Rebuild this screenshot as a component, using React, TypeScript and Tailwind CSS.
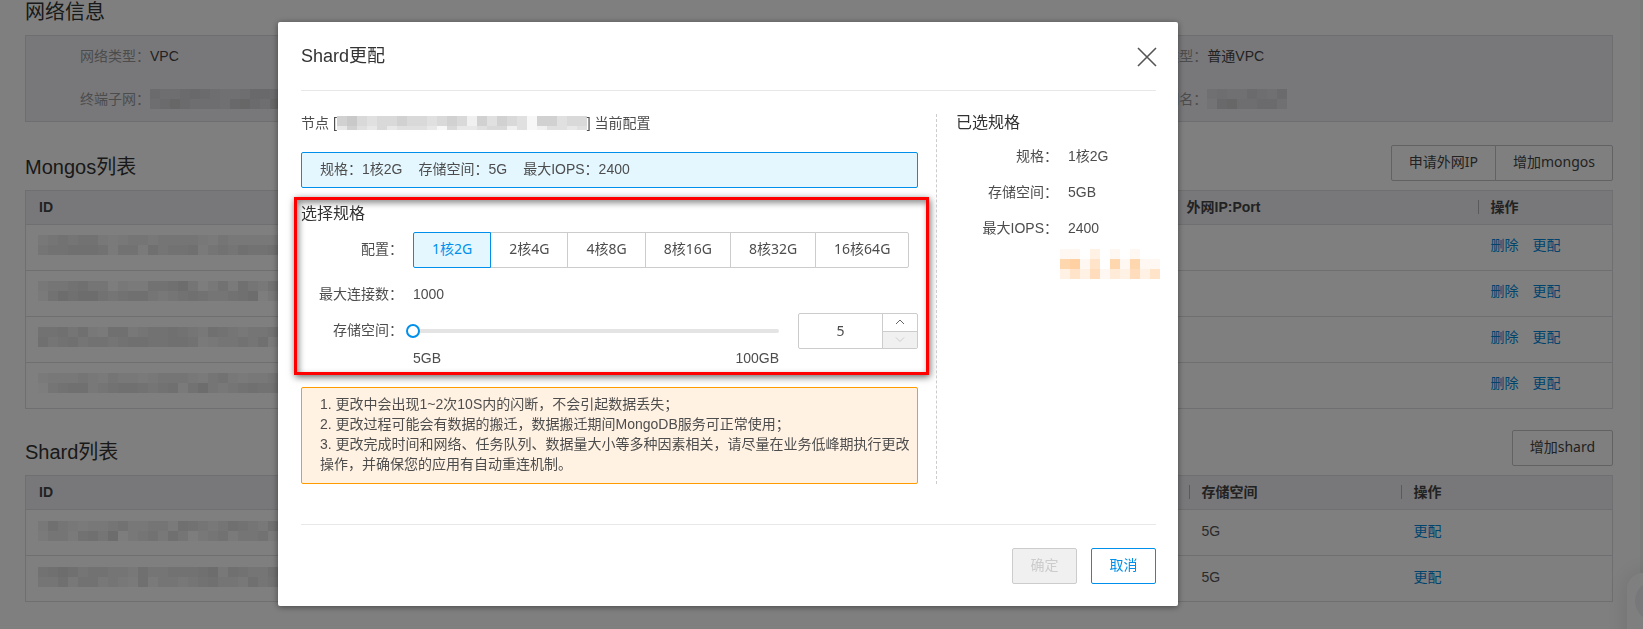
import { useState } from "react"
import type { ReactNode } from "react"
import clsx from "clsx"

const specs = ["1核2G", "2核4G", "4核8G", "8核16G", "8核32G", "16核64G"]

const MIN_SPACE = 5
const MAX_SPACE = 100

const mongosRows = [
  ["3454553234434444324333334", "4556665255264556245465567"],
  ["3445644132255674135264354", "2576775456643456544567135"],
  ["5564632663455654365434454", "6456455456655665234454627"],
  ["2333432433234443245323343", "1456634566545625743456554"],
]

const shardRows = [
  ["3643233453344265434654363", "2442564713453641345244523"],
  ["5676455443644555673654465", "4463553432624434564436455"],
]

// Masked value: every digit is one cell, the higher the darker
function Mosaic({ rows, color = "#000", step = 0.02 }: { rows: string[]; color?: string; step?: number }) {
  const width = rows[0].length * 10
  const height = rows.length * 10
  return (
    <svg
      width={width}
      height={height}
      viewBox={`0 0 ${width} ${height}`}
      shapeRendering="crispEdges"
      aria-hidden="true"
      className="shrink-0"
    >
      {rows.map((row, y) =>
        row
          .split("")
          .map((digit, x) => (
            <rect key={`${x}-${y}`} x={x * 10} y={y * 10} width="10" height="10" fill={color} fillOpacity={Number(digit) * step} />
          ))
      )}
    </svg>
  )
}

function InfoItem({ label, className, children }: { label: string; className?: string; children: ReactNode }) {
  return (
    <div className={clsx("flex h-10 items-center", className)}>
      <dt className="w-[124px] shrink-0 text-right text-[#999]">{label}：</dt>
      <dd className="text-[#444]">{children}</dd>
    </div>
  )
}

function Th({ divider, className, children }: { divider?: boolean; className?: string; children: ReactNode }) {
  return (
    <th className={clsx("p-0 pb-0.5 text-left font-bold text-[#444]", className)}>
      <div className={clsx("h-3.5 leading-3.5", divider ? "border-l border-[#b4b4b8] pl-3" : "pl-[13px]")}>{children}</div>
    </th>
  )
}

function PageButton({ className, children }: { className?: string; children: ReactNode }) {
  return (
    <button
      type="button"
      className={clsx(
        "h-9 border border-[#c4c4c8] px-[17px] pb-0.5 font-['Noto_Sans','Noto_Sans_CJK_SC',sans-serif] text-[#444]",
        className
      )}
    >
      {children}
    </button>
  )
}

function Field({ label, htmlFor, children }: { label: string; htmlFor?: string; children: ReactNode }) {
  return (
    <div className="flex h-9 items-center gap-2.5">
      <label htmlFor={htmlFor} className="w-[102px] shrink-0 pb-0.5 text-right">
        {label}：
      </label>
      {children}
    </div>
  )
}

function Chevron({ down }: { down?: boolean }) {
  return (
    <svg width="10" height="6" viewBox="0 0 10 6" fill="none" stroke="currentColor" aria-hidden="true">
      <path d={down ? "M1 0.5 5 4.5 9 0.5" : "M1 5 5 1 9 5"} />
    </svg>
  )
}

function InstancePage() {
  return (
    <main className="pr-[30px] pl-[25px]">
      <section>
        <h2 className="mb-[11px] text-xl leading-6 text-[#333]">网络信息</h2>
        <dl className="grid grid-cols-3 gap-y-[3px] border border-[#dcdce2] bg-[#f0f0f4] pb-0.5">
          <InfoItem label="网络类型">VPC</InfoItem>
          <InfoItem label="网络类型" className="col-start-3">
            普通VPC
          </InfoItem>
          <InfoItem label="终端子网">
            <Mosaic rows={["5445654334665264", "4575444367547554"]} />
          </InfoItem>
          <InfoItem label="子网名" className="col-start-3">
            <Mosaic rows={["34335435", "26744553"]} />
          </InfoItem>
        </dl>
      </section>

      <section className="mt-[23px]">
        <div className="mb-[9px] flex items-center justify-between">
          <h2 className="pt-2 text-xl text-[#333]">Mongos列表</h2>
          <div className="flex">
            <PageButton className="rounded-l-xs">申请外网IP</PageButton>
            <PageButton className="-ml-px rounded-r-xs">增加mongos</PageButton>
          </div>
        </div>
        <table className="w-full table-fixed border-collapse border border-[#dfdfe2]">
          <thead>
            <tr className="h-[34px] border-b border-[#dfdfe2] bg-[#f0f0f4]">
              <Th>ID</Th>
              <Th divider className="w-[304px]">外网IP:Port</Th>
              <Th divider className="w-[135px]">操作</Th>
            </tr>
          </thead>
          <tbody>
            {mongosRows.map((rows, i) => (
              <tr key={i} className="h-[46px] border-b border-[#dfdfe2]">
                <td className="p-0 pb-1.5 pl-3">
                  <Mosaic rows={rows} />
                </td>
                <td />
                <td className="p-0 pb-1.5 pl-[13px]">
                  <div className="flex gap-3.5 text-[#0088dd]">
                    <a href="#delete">删除</a>
                    <a href="#resize">更配</a>
                  </div>
                </td>
              </tr>
            ))}
          </tbody>
        </table>
      </section>

      <section className="mt-[21px]">
        <div className="mb-[9px] flex items-center justify-between">
          <h2 className="pt-2 text-xl text-[#333]">Shard列表</h2>
          <PageButton className="rounded-xs">增加shard</PageButton>
        </div>
        <table className="w-full table-fixed border-collapse border border-[#dfdfe2]">
          <thead>
            <tr className="h-[34px] border-b border-[#dfdfe2] bg-[#f0f0f4]">
              <Th>ID</Th>
              <Th divider className="w-[212px]">存储空间</Th>
              <Th divider className="w-[212px]">操作</Th>
            </tr>
          </thead>
          <tbody>
            {shardRows.map((rows, i) => (
              <tr key={i} className="h-[46px] border-b border-[#dfdfe2]">
                <td className="p-0 pb-1 pl-3">
                  <Mosaic rows={rows} />
                </td>
                <td className="p-0 pb-1 pl-[13px] text-[#555]">5G</td>
                <td className="p-0 pb-1 pl-[13px]">
                  <a href="#resize" className="text-[#0088dd]">
                    更配
                  </a>
                </td>
              </tr>
            ))}
          </tbody>
        </table>
      </section>
    </main>
  )
}

function ResizeDialog() {
  const [spec, setSpec] = useState(specs[0])
  const [space, setSpace] = useState(MIN_SPACE)

  const changeSpace = (value: number) => setSpace(Math.min(MAX_SPACE, Math.max(MIN_SPACE, value)))

  return (
    <div
      role="dialog"
      aria-modal="true"
      aria-labelledby="dialog-title"
      className="w-[900px] max-w-full rounded-xs bg-white pr-[22px] pb-[22px] pl-[23px] shadow-[0_1px_6px_rgba(0,0,0,0.45)]"
    >
      <header className="flex h-[69px] items-center justify-between border-b border-[#e8e8e8]">
        <h1 id="dialog-title" className="text-lg text-[#333]">
          Shard更配
        </h1>
        <button type="button" aria-label="关闭" className="pt-0.5 text-[#555]">
          <svg width="18" height="18" viewBox="0 0 18 18" fill="none" stroke="currentColor" strokeWidth="1.6" className="overflow-visible">
            <path d="M0 0 18 18M18 0 0 18" />
          </svg>
        </button>
      </header>

      <div className="flex pt-[23px] pb-10">
        <div className="min-w-0 flex-1">
          <p className="flex leading-[18px]">
            节点&nbsp;[
            <span className="flex h-3.5 self-center overflow-hidden">
              <Mosaic rows={["6754556554565264654166455", "3643534443153345524124434"]} step={0.03} />
            </span>
            ]&nbsp;当前配置
          </p>

          <div className="mt-5 flex h-9 items-center gap-4 rounded-xs border border-[#0090eb] bg-[#e4f7ff] px-[18px] pb-0.5">
            <span>规格：1核2G</span>
            <span>存储空间：5G</span>
            <span>最大IOPS：2400</span>
          </div>

          <section className="mt-[9px] -mr-[11px] -ml-[7px] border-3 border-[#f00] pt-1 pr-2 pb-[5px] pl-1 shadow-[1px_2px_7px_rgba(0,0,0,0.6),inset_2px_3px_6px_rgba(0,0,0,0.45)]">
            <h2 className="text-base leading-5 text-[#333]">选择规格</h2>
            <div className="mt-2 mb-[9px]">
              <Field label="配置">
                <div className="flex font-['Noto_Sans','Noto_Sans_CJK_SC',sans-serif]">
                  {specs.map((item) => (
                    <button
                      key={item}
                      type="button"
                      aria-pressed={item === spec}
                      onClick={() => setSpec(item)}
                      className={clsx(
                        "-mr-px h-9 border px-[18px] pb-0.5 first:rounded-l-xs last:rounded-r-xs",
                        item === spec ? "z-10 border-[#0090eb] bg-[#e4f7ff] text-[#0090eb]" : "border-[#ccc] bg-white"
                      )}
                    >
                      {item}
                    </button>
                  ))}
                </div>
              </Field>
            </div>
            <Field label="最大连接数">
              <span className="pb-0.5">1000</span>
            </Field>
            <Field label="存储空间" htmlFor="space">
              <div className="relative flex flex-1 items-center">
                <div className="absolute inset-x-0 h-1 rounded-full bg-[#e4e4e4]" />
                <input
                  id="space"
                  type="range"
                  min={MIN_SPACE}
                  max={MAX_SPACE}
                  value={space}
                  onChange={(e) => changeSpace(Number(e.target.value))}
                  className="relative -mx-[7px] h-3.5 w-[calc(100%+14px)] shrink-0 appearance-none bg-transparent [&::-webkit-slider-thumb]:size-3.5 [&::-webkit-slider-thumb]:appearance-none [&::-webkit-slider-thumb]:rounded-full [&::-webkit-slider-thumb]:border-2 [&::-webkit-slider-thumb]:border-[#0090eb] [&::-webkit-slider-thumb]:bg-white"
                />
              </div>
              <div className="ml-[9px] flex h-9 w-[120px] overflow-hidden rounded-xs border border-[#ccc]">
                <input
                  type="text"
                  inputMode="numeric"
                  aria-label="存储空间（GB）"
                  value={space}
                  onChange={(e) => changeSpace(Number(e.target.value) || MIN_SPACE)}
                  className="w-0 flex-1 text-center font-['Noto_Sans',sans-serif]"
                />
                <div className="flex w-[35px] flex-col border-l border-[#ccc]">
                  <button
                    type="button"
                    aria-label="增加"
                    onClick={() => changeSpace(space + 5)}
                    className="flex flex-1 items-center justify-center text-[#666]"
                  >
                    <Chevron />
                  </button>
                  <button
                    type="button"
                    aria-label="减少"
                    disabled={space === MIN_SPACE}
                    onClick={() => changeSpace(space - 5)}
                    className="flex flex-1 items-center justify-center border-t border-[#ccc] text-[#666] disabled:bg-[#f0f0f0] disabled:text-[#ccc]"
                  >
                    <Chevron down />
                  </button>
                </div>
              </div>
            </Field>
            <div className="mr-[139px] ml-28 flex justify-between leading-[18px]">
              <span>5GB</span>
              <span>100GB</span>
            </div>
          </section>

          <div className="mt-3 rounded-xs border border-[#ff9a00] bg-[#fff2e3] pt-1.5 pr-1.5 pb-[9px] pl-[18px] leading-5">
            <p>1. 更改中会出现1~2次10S内的闪断，不会引起数据丢失；</p>
            <p>2. 更改过程可能会有数据的搬迁，数据搬迁期间MongoDB服务可正常使用；</p>
            <p>3. 更改完成时间和网络、任务队列、数据量大小等多种因素相关，请尽量在业务低峰期执行更改操作，并确保您的应用有自动重连机制。</p>
          </div>
        </div>

        <aside className="ml-[18px] w-[220px] shrink-0 border-l border-dashed border-[#ccc] pl-[19px]">
          <h2 className="mb-[7px] text-base leading-[18px] text-[#333]">已选规格</h2>
          <Field label="规格">
            <span className="pb-0.5">{spec}</span>
          </Field>
          <Field label="存储空间">
            <span className="pb-0.5">{space}GB</span>
          </Field>
          <Field label="最大IOPS">
            <span className="pb-0.5">2400</span>
          </Field>
          <div className="mt-0.5 ml-[104px] flex">
            <Mosaic rows={["1102010100", "6714061611", "2425132524"]} color="#ff9020" step={0.06} />
          </div>
        </aside>
      </div>

      <footer className="flex justify-end gap-3.5 border-t border-[#e8e8e8] pt-[23px]">
        <button type="button" disabled className="h-9 w-[65px] rounded-xs border border-[#ccc] bg-[#f0f0f0] pb-0.5 text-[#ccc]">
          确定
        </button>
        <button type="button" className="h-9 w-[65px] rounded-xs border border-[#0090eb] bg-white pb-0.5 text-[#0090eb]">
          取消
        </button>
      </footer>
    </div>
  )
}

export default function App() {
  return (
    <div className="min-h-screen overflow-hidden border-r-3 border-[#f5f5f7] bg-white font-['Liberation_Sans','Noto_Sans_CJK_SC',sans-serif] text-sm text-[#4d4d4d]">
      <div className="-mr-[3px]">
        <InstancePage />
      </div>
      <div className="fixed -right-10 -bottom-10 flex h-24 w-14 justify-center rounded-2xl bg-white pt-2 shadow-[0_0_24px_rgba(0,0,0,0.12)]">
        <div className="size-10 rounded-full bg-[#f0f0f4]" />
      </div>
      <div className="fixed inset-0 flex items-start justify-center bg-black/50 pt-[22px] pr-[187px]">
        <ResizeDialog />
      </div>
    </div>
  )
}
